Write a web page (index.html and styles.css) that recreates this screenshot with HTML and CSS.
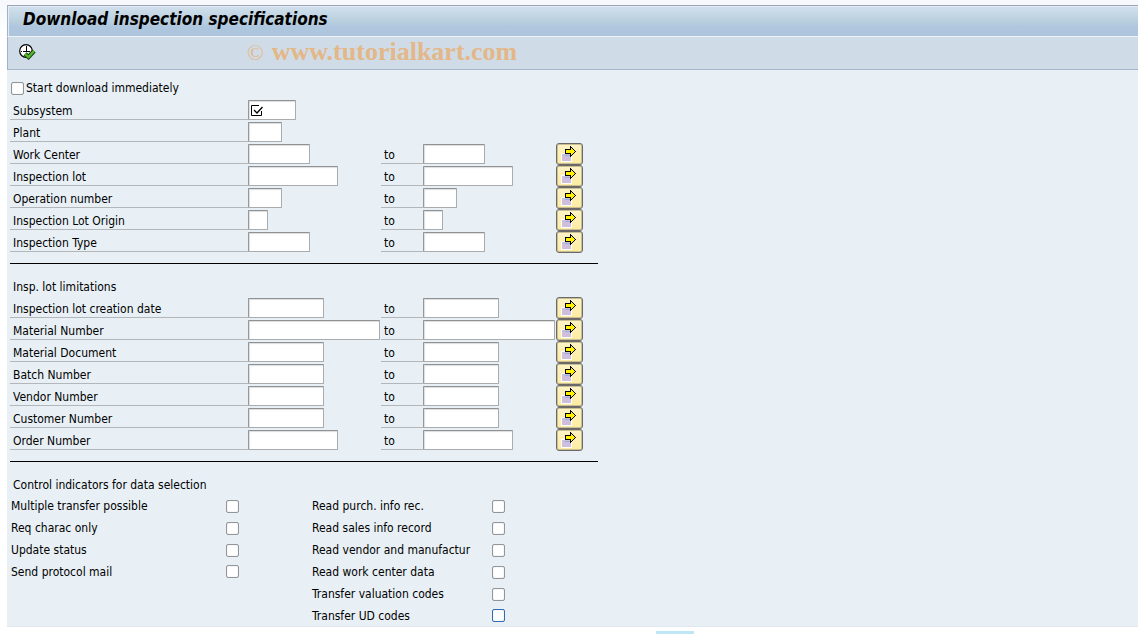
FILE: index.html
```
<!DOCTYPE html>
<html lang="en">
<head>
<meta charset="utf-8">
<title>Download inspection specifications</title>
<link rel="stylesheet" href="styles.css">
</head>
<body>
<svg class="sprite" aria-hidden="true">
  <symbol id="multi" viewBox="0 0 17 17">
    <path fill="#fff" d="M1 7h11v9H1z"/>
    <path fill="#d0bedd" d="M2 8h9v7H2z"/>
    <path fill="#8fb0e0" d="M5 9h5v1H5z"/>
    <path fill="#000" d="M10 0h1v1h1v1h1v1h1v1h1v1h1v1h-1v1h-1v1h-1v1h-1v1h-1v1h-1v-3H5V3h5z"/>
    <path fill="#fff000" d="M6 4h5V2h1v1h1v1h1v1h1v1h-1v1h-1v1h-1v1h-1V7H6z"/>
  </symbol>
</svg>
<main class="window">
  <header class="titlebar"><h1>Download inspection specifications</h1></header>
  <div class="toolbar">
    <button class="execute" type="button" aria-label="Execute">
      <svg viewBox="0 0 17 17" width="17" height="17">
        <circle cx="7" cy="7" r="6.3" fill="#fff" stroke="#000" stroke-width="1.2"/>
        <path d="M7.500 2v6M4 7.500h7M7.500 11v1M2 7.500h1" stroke="#000" fill="none"/>
        <path d="M6 10l3.500 3L15 7" stroke="#173b0b" stroke-width="4.400" fill="none"/>
        <path d="M6 10l3.500 3L15 7" stroke="#55b82e" stroke-width="2.400" fill="none"/>
      </svg>
    </button>
    <span class="watermark"><span class="copy">©</span>www.tutorialkart.com</span>
  </div>
  <form class="form">
    <label class="start"><input class="check" type="checkbox">Start download immediately</label>
    <div class="row"><label class="name" for="f0">Subsystem</label>
      <div class="required"><input class="field w48" id="f0" type="text"><svg class="mark" viewBox="0 0 12 12" width="12" height="12"><path d="M8 .5H.5v10h10V6" fill="none" stroke="#000"/><path d="M3 5l3 3 5.500-6" fill="none" stroke="#000" stroke-width="1.300"/></svg></div></div>
    <div class="row"><label class="name" for="f1">Plant</label><input class="field w34" id="f1" type="text"></div>
    <div class="row"><label class="name" for="f2">Work Center</label><input class="field w62" id="f2" type="text"><label class="to" for="t2">to</label><input class="field w62" id="t2" type="text"><button class="multi" type="button" aria-label="Multiple selection"><svg><use href="#multi"/></svg></button></div>
    <div class="row"><label class="name" for="f3">Inspection lot</label><input class="field w90" id="f3" type="text"><label class="to" for="t3">to</label><input class="field w90" id="t3" type="text"><button class="multi" type="button" aria-label="Multiple selection"><svg><use href="#multi"/></svg></button></div>
    <div class="row"><label class="name" for="f4">Operation number</label><input class="field w34" id="f4" type="text"><label class="to" for="t4">to</label><input class="field w34" id="t4" type="text"><button class="multi" type="button" aria-label="Multiple selection"><svg><use href="#multi"/></svg></button></div>
    <div class="row"><label class="name" for="f5">Inspection Lot Origin</label><input class="field w20" id="f5" type="text"><label class="to" for="t5">to</label><input class="field w20" id="t5" type="text"><button class="multi" type="button" aria-label="Multiple selection"><svg><use href="#multi"/></svg></button></div>
    <div class="row"><label class="name" for="f6">Inspection Type</label><input class="field w62" id="f6" type="text"><label class="to" for="t6">to</label><input class="field w62" id="t6" type="text"><button class="multi" type="button" aria-label="Multiple selection"><svg><use href="#multi"/></svg></button></div>
    <hr class="rule">
    <h2 class="heading">Insp. lot limitations</h2>
    <div class="row"><label class="name" for="f7">Inspection lot creation date</label><input class="field w76" id="f7" type="text"><label class="to" for="t7">to</label><input class="field w76" id="t7" type="text"><button class="multi" type="button" aria-label="Multiple selection"><svg><use href="#multi"/></svg></button></div>
    <div class="row"><label class="name" for="f8">Material Number</label><input class="field w132" id="f8" type="text"><label class="to" for="t8">to</label><input class="field w132" id="t8" type="text"><button class="multi" type="button" aria-label="Multiple selection"><svg><use href="#multi"/></svg></button></div>
    <div class="row"><label class="name" for="f9">Material Document</label><input class="field w76" id="f9" type="text"><label class="to" for="t9">to</label><input class="field w76" id="t9" type="text"><button class="multi" type="button" aria-label="Multiple selection"><svg><use href="#multi"/></svg></button></div>
    <div class="row"><label class="name" for="f10">Batch Number</label><input class="field w76" id="f10" type="text"><label class="to" for="t10">to</label><input class="field w76" id="t10" type="text"><button class="multi" type="button" aria-label="Multiple selection"><svg><use href="#multi"/></svg></button></div>
    <div class="row"><label class="name" for="f11">Vendor Number</label><input class="field w76" id="f11" type="text"><label class="to" for="t11">to</label><input class="field w76" id="t11" type="text"><button class="multi" type="button" aria-label="Multiple selection"><svg><use href="#multi"/></svg></button></div>
    <div class="row"><label class="name" for="f12">Customer Number</label><input class="field w76" id="f12" type="text"><label class="to" for="t12">to</label><input class="field w76" id="t12" type="text"><button class="multi" type="button" aria-label="Multiple selection"><svg><use href="#multi"/></svg></button></div>
    <div class="row"><label class="name" for="f13">Order Number</label><input class="field w90" id="f13" type="text"><label class="to" for="t13">to</label><input class="field w90" id="t13" type="text"><button class="multi" type="button" aria-label="Multiple selection"><svg><use href="#multi"/></svg></button></div>
    <hr class="rule">
    <h2 class="heading">Control indicators for data selection</h2>
    <div class="options">
      <div class="column first">
        <label class="option">Multiple transfer possible<input class="check" type="checkbox"></label>
        <label class="option">Req charac only<input class="check" type="checkbox"></label>
        <label class="option">Update status<input class="check" type="checkbox"></label>
        <label class="option">Send protocol mail<input class="check" type="checkbox"></label>
      </div>
      <div class="column second">
        <label class="option">Read purch. info rec.<input class="check" type="checkbox"></label>
        <label class="option">Read sales info record<input class="check" type="checkbox"></label>
        <label class="option">Read vendor and manufactur<input class="check" type="checkbox"></label>
        <label class="option">Read work center data<input class="check" type="checkbox"></label>
        <label class="option">Transfer valuation codes<input class="check" type="checkbox"></label>
        <label class="option">Transfer UD codes<input class="check active" type="checkbox"></label>
      </div>
    </div>
  </form>
</main>
<footer class="footer"><span class="tab"></span></footer>
</body>
</html>
```
FILE: styles.css
```
* { box-sizing: border-box; }
body {
  margin: 0;
  padding: 5px 0 0 7px;
  background: linear-gradient(#f6f8fc 0, #fff 40px) no-repeat #fff;
  color: #000;
  font: 12px/24px "DejaVu Sans Condensed", "DejaVu Sans", sans-serif;
  overflow: hidden;
}
.sprite { position: absolute; width: 0; height: 0; }
.window { background: #e8f0f6; border-bottom: 1px solid #dfe7f0; }
.titlebar {
  height: 32px;
  padding-left: 15px;
  border-top: 1px solid #9aa5b8;
  border-left: 1px solid #9fb2c8;
  border-bottom: 1px solid #eef3f8;
  box-shadow: inset 1px 1px #e3ebf4;
  background: linear-gradient(#d2e0ed, #bad0df 50%, #aec6de 70%, #adc4dd);
}
h1 {
  margin: 0;
  font: italic bold 17px/26px "DejaVu Sans Condensed", "DejaVu Sans", sans-serif;
}
.toolbar {
  display: flex;
  align-items: center;
  height: 33px;
  padding-left: 11px;
  border-left: 1px solid #9fb2c8;
  border-bottom: 1px solid #a5b7ca;
  background: #cfdce7;
}
.execute {
  display: flex;
  width: 18px;
  height: 18px;
  padding: 0;
  border: 0;
  background: none;
}
.watermark {
  margin-left: 210px;
  padding-bottom: 2px;
  color: #e3b787;
  font: bold 26px/28px "Liberation Serif", serif;
}
.copy { margin-right: 8px; font-weight: normal; font-size: 22px; }
.form { padding: 7px 0 0 3px; }
.start {
  display: flex;
  align-items: center;
  gap: 2px;
  width: max-content;
  height: 22px;
  padding-left: 1px;
}
.check {
  appearance: none;
  flex: none;
  width: 13px;
  height: 13px;
  margin: 0;
  border: 1px solid #929599;
  border-radius: 2px;
  background: #fff;
  box-shadow: inset 0 0 1px #aaa;
}
.check.active { border-color: #2f6db5; }
.row {
  display: grid;
  grid-template-columns: 238px 133px 42px 133px 27px;
  height: 22px;
}
.name, .to { height: 21px; padding-left: 3px; border-bottom: 1px solid #b3b7ba; }
.field {
  height: 20px;
  margin: 1px 0 0;
  padding: 0 3px;
  border: 1px solid #a9acaf;
  border-top-color: #8e9295;
  border-left-color: #94989b;
  border-radius: 1px;
  background: #fff;
  box-shadow: inset 1px 1px 1px #ddd;
  font: inherit;
}
.w20 { width: 20px; }
.w34 { width: 34px; }
.w48 { width: 48px; }
.w62 { width: 62px; }
.w76 { width: 76px; }
.w90 { width: 90px; }
.w132 { width: 132px; }
.required { position: relative; display: flex; }
.mark { position: absolute; left: 3px; top: 6px; }
.multi {
  display: flex;
  width: 27px;
  height: 22px;
  padding: 2px 3px;
  border: 1px solid #6b6a68;
  border-radius: 3px;
  background: linear-gradient(#fdf3c6, #fdeb9e);
  box-shadow: inset 0 0 0 1px #c9bf95;
}
.multi svg { width: 17px; height: 17px; flex: none; }
.rule { width: 588px; height: 1px; margin: 10px 0 11px; border: 0; background: #000; }
.heading { height: 22px; margin: 0; padding-left: 3px; font: inherit; }
.options { display: flex; gap: 73px; padding-left: 1px; }
.option {
  display: flex;
  align-items: center;
  justify-content: space-between;
  height: 22px;
}
.option:last-child { height: 21px; }
.first { width: 228px; }
.second { width: 193px; }
.footer { padding: 4px 0 0 649px; }
.tab { display: block; width: 38px; height: 4px; background: #bfe6f7; }
```
